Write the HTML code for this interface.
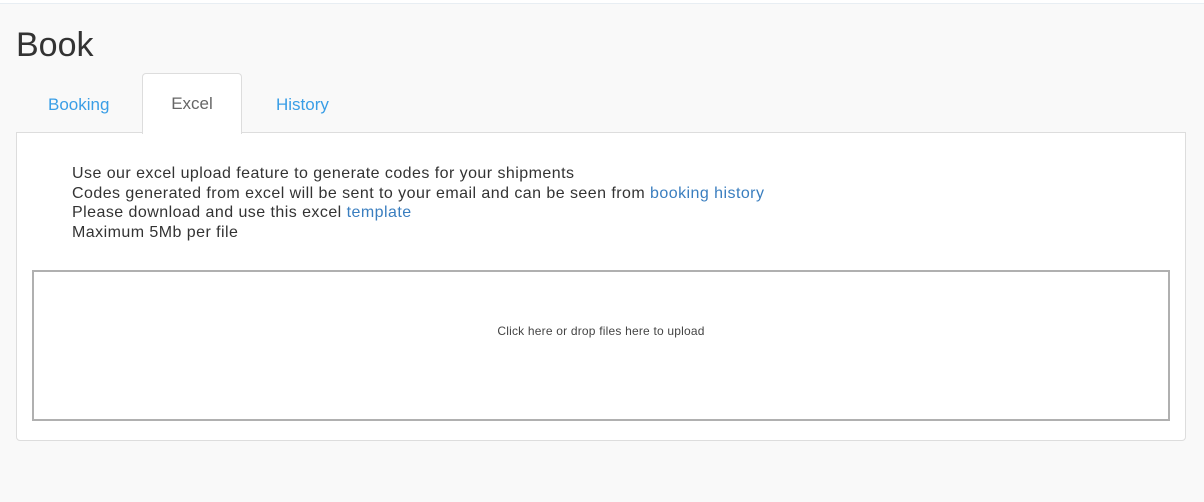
<!DOCTYPE html>
<html><head><style>
body{margin:0;width:1204px;height:502px;background:#f9f9f9;font-family:"Liberation Sans",sans-serif;position:relative;overflow:hidden}
.top{position:absolute;left:0;top:0;width:1204px;height:3px;border-bottom:1px solid #e8eef3;background:#fff}
h1{position:absolute;left:16px;top:26px;margin:0;font-weight:normal;font-size:34px;color:#333}
.tab{position:absolute;top:95px;font-size:17px;color:#3a9ee6}
.active{position:absolute;left:142px;top:73px;width:98px;height:60px;background:#fff;border:1px solid #ddd;border-bottom:none;border-radius:4px 4px 0 0;z-index:2;text-align:center;line-height:60px;font-size:17px;color:#666}
.panel{position:absolute;left:16px;top:132px;width:1168px;height:307px;background:#fff;border:1px solid #ddd;border-radius:0 0 4px 4px}
.txt{position:absolute;left:72px;top:164px;font-size:16px;line-height:19.5px;color:#333;letter-spacing:0.45px}
.txt a{color:#3a7ebf;text-decoration:none}
.drop{position:absolute;left:32px;top:270px;width:1134px;height:147px;border:2px solid #b0b0b0;background:#fff;text-align:center;line-height:118px;font-size:12px;color:#444;letter-spacing:0.2px}
</style></head><body>
<div class="top"></div>
<h1>Book</h1>
<div class="tab" style="left:48px">Booking</div>
<div class="active">Excel</div>
<div class="tab" style="left:276px">History</div>
<div class="panel"></div>
<div class="txt">Use our excel upload feature to generate codes for your shipments<br>Codes generated from excel will be sent to your email and can be seen from <a>booking history</a><br>Please download and use this excel <a>template</a><br>Maximum 5Mb per file</div>
<div class="drop">Click here or drop files here to upload</div>
</body></html>
